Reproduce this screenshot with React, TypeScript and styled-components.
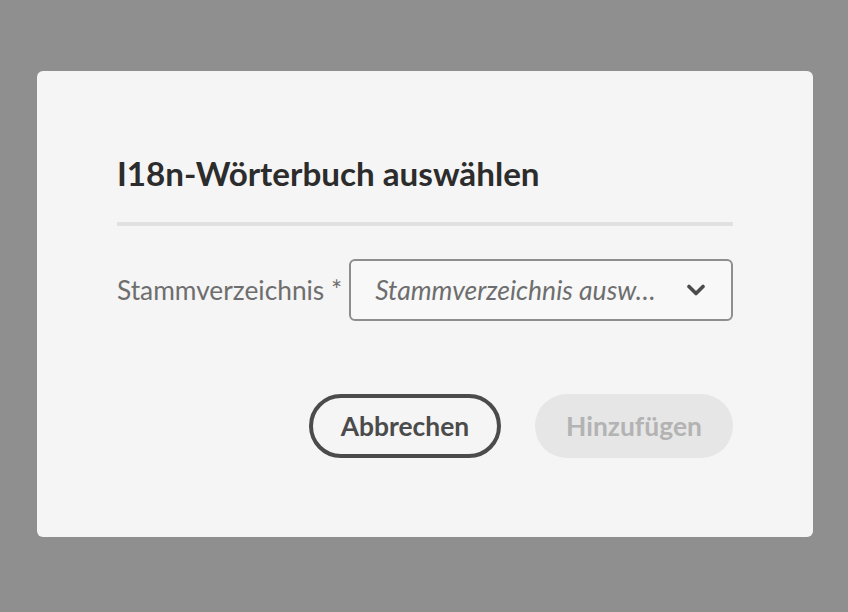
import React from "react";
import styled, { createGlobalStyle } from "styled-components";

const Global = createGlobalStyle`
  html, body { margin: 0; padding: 0; }
  body { background: #8f8f8f; font-family: Lato, "Open Sans", sans-serif; }
`;

const Backdrop = styled.div`
  width: 848px;
  height: 612px;
  display: flex;
  align-items: center;
  justify-content: center;
  background: #8f8f8f;
`;

const Dialog = styled.section`
  box-sizing: border-box;
  width: 776px;
  height: 466px;
  margin-top: -4px;
  margin-left: 2px;
  background: #f5f5f5;
  border-radius: 6px;
  padding: 80px 80px 79px;
  display: flex;
  flex-direction: column;
`;

const Title = styled.h2`
  margin: 0;
  font-size: 33.2px;
  line-height: 44px;
  font-weight: 700;
  color: #2c2c2c;
`;

const Divider = styled.hr`
  margin: 27px 0 0;
  border: none;
  height: 4px;
  background: #e1e1e1;
`;

const FieldRow = styled.div`
  margin-top: 33px;
  display: flex;
  align-items: center;
  gap: 7px;
`;

const Label = styled.label`
  font-size: 26.3px;
  color: #6e6e6e;
  white-space: nowrap;
`;

const Picker = styled.button`
  box-sizing: border-box;
  flex: 1;
  height: 62px;
  border: 2px solid #8e8e8e;
  border-radius: 6px;
  background: #f8f8f8;
  display: flex;
  align-items: center;
  padding: 0 26px 0 24px;
  font-family: inherit;
  cursor: pointer;
`;

const Placeholder = styled.span`
  flex: 1;
  text-align: left;
  font-size: 26.5px;
  font-style: italic;
  color: #6e6e6e;
  white-space: nowrap;
  overflow: hidden;
  text-overflow: ellipsis;
`;

const ButtonGroup = styled.div`
  margin-top: auto;
  display: flex;
  justify-content: flex-end;
  gap: 34px;
`;

const Button = styled.button<{ $variant: "secondary" | "disabled" }>`
  box-sizing: border-box;
  height: 64px;
  border-radius: 32px;
  font-family: inherit;
  font-size: 26.4px;
  font-weight: 700;
  padding: 0 24px;
  ${(p) =>
    p.$variant === "secondary"
      ? `border: 4px solid #4b4b4b; background: transparent; color: #4b4b4b; min-width: 192px;`
      : `border: none; background: #e6e6e6; color: #b3b3b3; min-width: 198px;`}
`;

const Chevron = () => (
  <svg width="18" height="12" viewBox="0 0 18 12" aria-hidden="true">
    <path
      d="M2 2.5 L9 9.5 L16 2.5"
      fill="none"
      stroke="#4b4b4b"
      strokeWidth="3.6"
      strokeLinecap="round"
      strokeLinejoin="round"
    />
  </svg>
);

export default function App() {
  return (
    <>
      <Global />
      <Backdrop>
        <Dialog role="dialog">
          <Title>I18n-Wörterbuch auswählen</Title>
          <Divider />
          <FieldRow>
            <Label>Stammverzeichnis *</Label>
            <Picker>
              <Placeholder>Stammverzeichnis ausw…</Placeholder>
              <Chevron />
            </Picker>
          </FieldRow>
          <ButtonGroup>
            <Button $variant="secondary">Abbrechen</Button>
            <Button $variant="disabled" disabled>
              Hinzufügen
            </Button>
          </ButtonGroup>
        </Dialog>
      </Backdrop>
    </>
  );
}
